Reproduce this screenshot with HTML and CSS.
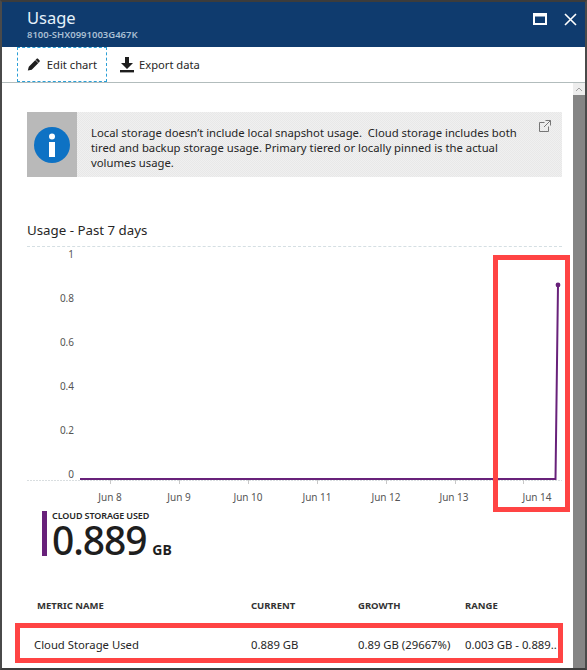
FILE: index.html
```html
<!DOCTYPE html>
<html lang="en">
<head>
<meta charset="utf-8">
<title>Usage</title>
<link rel="stylesheet" href="styles.css">
</head>
<body>
<div class="frame">
  <header class="blade-head">
    <div class="blade-titles">
      <div class="blade-title">Usage</div>
      <div class="blade-sub">8100-SHX0991003G467K</div>
    </div>
    <div class="blade-controls">
      <svg class="ctl" width="14" height="12" viewBox="0 0 14 12"><rect x="1" y="1" width="12" height="10" fill="none" stroke="#fff" stroke-width="2"/><rect x="1" y="1" width="12" height="2.5" fill="#fff"/></svg>
      <svg class="ctl" width="13" height="13" viewBox="0 0 13 13"><path d="M1 1l11 11M12 1L1 12" fill="none" stroke="#fff" stroke-width="1.6"/></svg>
    </div>
  </header>
  <nav class="toolbar">
    <button class="tool tool-focus">
      <svg width="16" height="17" viewBox="0 0 17 17"><path d="M1 16l1.2-4.8L11.6 1.8c.7-.7 1.6-.7 2.2-.1l1.5 1.5c.6.6.6 1.5-.1 2.2L5.8 14.8z" fill="#1e1e1e"/><path d="M10.4 3l3.6 3.6" stroke="#fff" stroke-width=".8"/></svg>
      <span>Edit chart</span>
    </button>
    <button class="tool">
      <svg width="14" height="17" viewBox="0 0 14 17"><path d="M5 1h4v6h4l-6 6-6-6h4z" fill="#1e1e1e"/><rect y="14" width="14" height="2.4" fill="#1e1e1e"/></svg>
      <span>Export data</span>
    </button>
  </nav>
  <div class="blade-body">
    <main class="content">
      <section class="notice">
        <div class="notice-icon">
          <svg width="36" height="36" viewBox="0 0 36 36"><circle cx="18" cy="18" r="18" fill="#0e72c4"/><circle cx="18" cy="9.5" r="3" fill="#fff"/><rect x="15" y="15" width="6" height="15" fill="#fff"/></svg>
        </div>
        <p class="notice-text">Local storage doesn’t include local snapshot usage.&nbsp; Cloud storage includes both tired and backup storage usage. Primary tiered or locally pinned is the actual volumes usage.</p>
        <svg class="notice-link" width="12" height="12" viewBox="0 0 12 12"><path d="M9.5 6.5v5h-9v-9h5M6.5.5h5v5M11.5.5L5 7" fill="none" stroke="#767676"/></svg>
      </section>
      <h2 class="chart-title">Usage - Past 7 days</h2>
      <div class="chart">
        <svg class="chart-svg" width="573" height="258" viewBox="0 247 573 258">
          <g class="y-labels">
            <text x="74" y="258">1</text>
            <text x="74" y="302">0.8</text>
            <text x="74" y="346">0.6</text>
            <text x="74" y="390">0.4</text>
            <text x="74" y="434">0.2</text>
            <text x="74" y="478">0</text>
          </g>
          <line x1="27" y1="480.5" x2="562" y2="480.5" stroke="#d9dee0" stroke-dasharray="2 1"/>
          <path d="M110.5 480v4M179.5 480v4M248.5 480v4M317.5 480v4M386.5 480v4M455.5 480v4M523.5 480v4" stroke="#c8c8c8"/>
          <path d="M80 479H555.5L558 285" fill="none" stroke="#68217a" stroke-width="2"/>
          <circle cx="558" cy="285" r="2.4" fill="#68217a"/>
          <g class="x-labels">
            <text x="110" y="501">Jun 8</text>
            <text x="179" y="501">Jun 9</text>
            <text x="248" y="501">Jun 10</text>
            <text x="317" y="501">Jun 11</text>
            <text x="386" y="501">Jun 12</text>
            <text x="454" y="501">Jun 13</text>
            <text x="537" y="501">Jun 14</text>
          </g>
        </svg>
        <div class="chart-mark"></div>
      </div>
      <section class="tile">
        <div class="tile-label">CLOUD STORAGE USED</div>
        <div class="tile-value"><span class="tile-num">0.889</span><span class="tile-unit">GB</span></div>
      </section>
      <section class="metrics">
        <div class="metric-row metric-head">
          <div>METRIC NAME</div><div>CURRENT</div><div>GROWTH</div><div>RANGE</div>
        </div>
        <div class="metric-row metric-data">
          <div>Cloud Storage Used</div><div>0.889 GB</div><div>0.89 GB (29667%)</div><div>0.003 GB - 0.889..</div>
        </div>
      </section>
    </main>
    <div class="scrollbar"><div class="scroll-up"><svg width="8" height="5" viewBox="0 0 8 5"><path d="M1 4l3-3 3 3" fill="none" stroke="#a0a0a0"/></svg></div><div class="scroll-thumb"></div></div>
  </div>
</div>
</body>
</html>
```

FILE: styles.css
```css
* { box-sizing: border-box; }
html, body { margin: 0; padding: 0; }
body {
  width: 587px;
  height: 670px;
  overflow: hidden;
  background: #fff;
  font-family: "Noto Sans", "Open Sans", sans-serif;
  color: #262626;
}
.frame {
  width: 587px;
  height: 670px;
  display: flex;
  flex-direction: column;
  border-top: 2px solid #3c3c3c;
  border-bottom: 2px solid #3c3c3c;
  border-left: 2px solid #4a4a4a;
  border-right: 2px solid #4a4a4a;
}
.blade-head {
  height: 45px;
  flex: none;
  display: flex;
  justify-content: space-between;
  background: #0f3b6e;
  color: #fff;
  padding: 5px 8px 0 25px;
}
.blade-title { font-size: 16.5px; line-height: 21px; color: #e6f2fa; }
.blade-sub { font-size: 9.5px; line-height: 13px; color: #a9bfd3; font-weight: 600; }
.blade-controls { display: flex; gap: 17px; padding-top: 6px; align-items: flex-start; }
.ctl { display: block; }
.toolbar {
  height: 36px;
  flex: none;
  display: flex;
  border-bottom: 1px solid #b2bcbc;
  padding-left: 15px;
  gap: 3px;
}
.tool {
  display: flex;
  align-items: center;
  gap: 5px;
  height: 35px;
  margin: 0;
  padding: 0 9px;
  border: 1px solid transparent;
  background: none;
  font: inherit;
  font-size: 11.2px;
  color: #262626;
  white-space: nowrap;
}
.tool-focus { border: 1px dashed #2a9fd6; width: 90px; gap: 6px; }
.blade-body { flex: 1; min-height: 0; display: flex; }
.content { width: 571px; flex: none; position: relative; padding-top: 29px; }
.notice {
  position: relative;
  display: flex;
  width: 535px;
  height: 65px;
  margin-left: 25px;
  background: repeating-conic-gradient(#e8e8e8 0 25%, #f0f0f0 0 50%) 0 0 / 2px 2px;
}
.notice-icon {
  width: 50px;
  flex: none;
  display: flex;
  align-items: center;
  justify-content: center;
  background: #b9b9b9;
}
.notice-text {
  margin: 0;
  padding: 13px 24px 0 14px;
  font-size: 11.3px;
  line-height: 15px;
  color: #262626;
}
.notice-link { position: absolute; top: 8px; right: 11px; }
.chart-title {
  margin: 44px 11px 0 25px;
  height: 26px;
  padding-bottom: 7px;
  font-size: 13.3px;
  line-height: 18px;
  font-weight: 400;
  border-bottom: 1px dashed #d5dfe3;
  color: #262626;
}
.chart { position: relative; height: 258px; margin-left: -2px; }
.chart-svg { display: block; }
.chart-svg text { font-size: 10px; fill: #555; font-family: "Noto Sans", sans-serif; }
.y-labels text { text-anchor: end; }
.x-labels text { text-anchor: middle; }
.chart-mark {
  position: absolute;
  left: 493px;
  top: 8px;
  width: 77px;
  height: 257px;
  border: 5px solid #ff4444;
}
.tile {
  margin: 6px 0 0 40px;
  height: 45px;
  padding-left: 5px;
  border-left: 5px solid #68217a;
}
.tile-label { font-size: 9px; line-height: 10px; font-weight: 600; letter-spacing: -.1px; color: #262626; }
.tile-value { display: flex; align-items: baseline; gap: 6px; line-height: 38px; color: #1e1e1e; }
.tile-num { font-size: 39px; font-weight: 500; letter-spacing: -1.1px; }
.tile-unit { font-size: 14px; font-weight: 700; }
.metrics { margin-top: 41px; }
.metric-row { display: grid; grid-template-columns: 214px 107px 107px 1fr; }
.metric-head {
  margin-left: 35px;
  height: 18px;
  font-size: 9.5px;
  line-height: 18px;
  font-weight: 700;
  color: #333;
}
.metric-data {
  width: 548px;
  height: 40px;
  margin: 8px 0 0 13px;
  padding: 2px 0 0 14px;
  grid-template-columns: 217px 107px 107px 1fr;
  align-items: center;
  border: 5px solid #ff4444;
  font-size: 11.3px;
  white-space: nowrap;
  overflow: hidden;
}
.scrollbar { width: 12px; flex: none; display: flex; flex-direction: column; }
.scroll-up { height: 12px; background: #ededed; display: flex; align-items: center; justify-content: center; }
.scroll-thumb { flex: 1; background: #858585; }
```
